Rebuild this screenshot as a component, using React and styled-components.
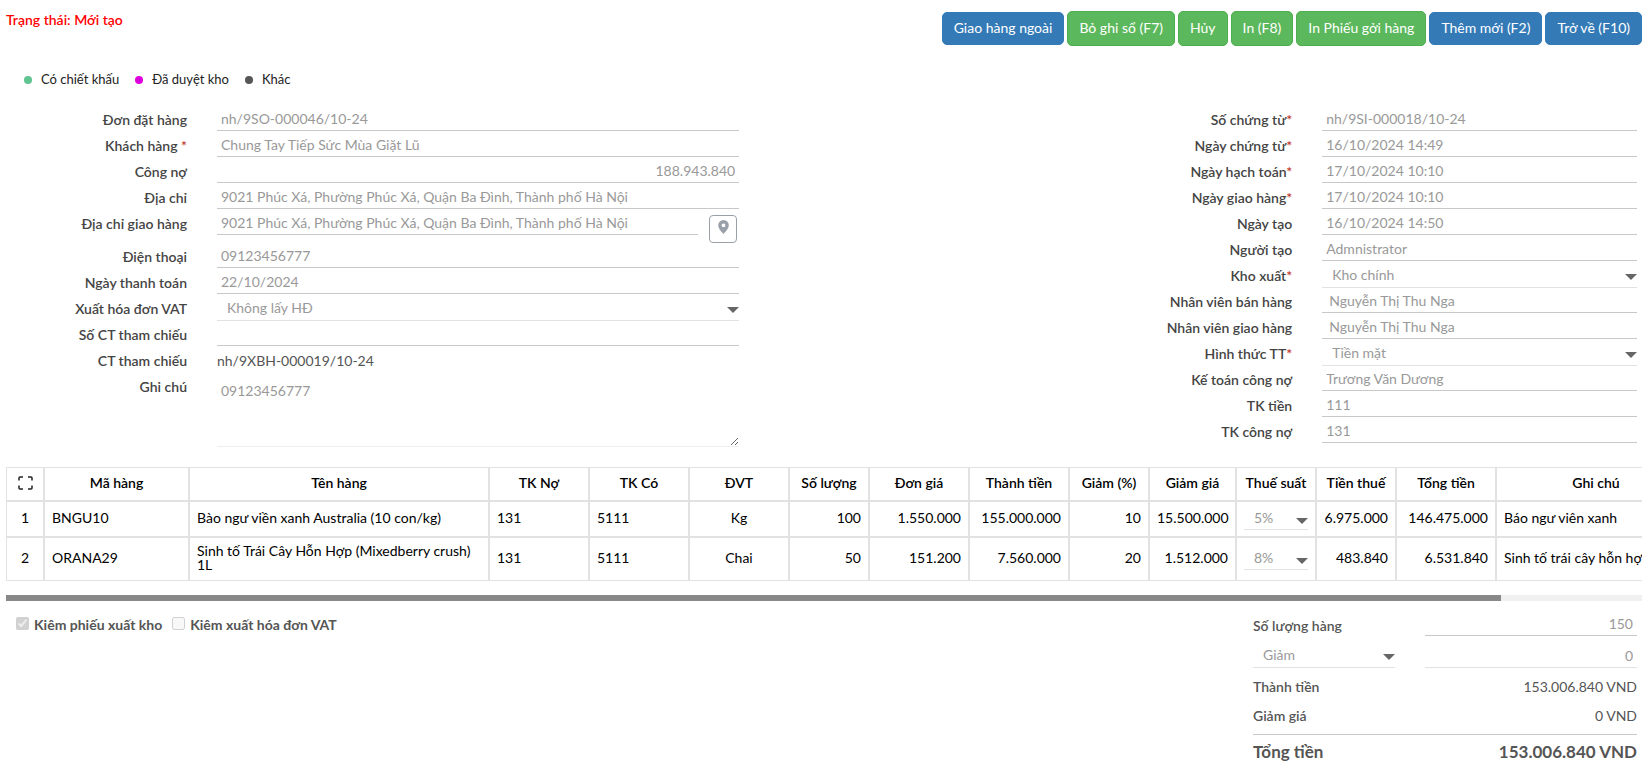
import React from "react";
import styled, { createGlobalStyle, css } from "styled-components";

const GlobalStyle = createGlobalStyle`
  *, *::before, *::after { box-sizing: border-box; }
  body {
    margin: 0;
    background: #fff;
    color: #555;
    font-family: Lato, "Open Sans", sans-serif;
    font-size: 14px;
    line-height: 20px;
  }
  input, select, textarea, button { font: inherit; margin: 0; }
`;

const LINE = "#c8c8c8";
const SOFT_LINE = "#e2e2e2";

const Page = styled.main`
  padding: 10px 7px 8px 6px;
`;

const Header = styled.header`
  display: flex;
  justify-content: space-between;
  align-items: flex-start;
`;

const Status = styled.p`
  margin: 0;
  color: #f00;
  font-weight: 600;
`;

const Toolbar = styled.div`
  display: flex;
  align-items: center;
  gap: 3px;
  height: 37px;
`;

const ActionButton = styled.button`
  padding: 0 11px 2px;
  height: ${(p) => (p.$green ? 35 : 33)}px;
  border: 1px solid ${(p) => (p.$green ? "#4cae4c" : "#337ab7")};
  border-radius: 5px;
  background: ${(p) => (p.$green ? "#5cb85c" : "#337ab7")};
  color: #fff;
  white-space: nowrap;
`;

const Legend = styled.ul`
  display: flex;
  gap: 16px;
  margin: 22px 0 0;
  padding: 0 0 0 18px;
  list-style: none;
  font-size: 13px;
  color: #222;
`;

const LegendItem = styled.li`
  display: flex;
  align-items: center;
  gap: 9px;
  &::before {
    content: "";
    width: 8px;
    height: 8px;
    margin-top: 2px;
    border-radius: 50%;
    background: ${(p) => p.$color};
  }
`;

const Forms = styled.div`
  display: flex;
  justify-content: space-between;
  align-items: flex-start;
  margin-top: 16px;
`;

const FormColumn = styled.div`
  flex: 0 0 ${(p) => p.$basis};
  padding-right: ${(p) => p.$end}px;
`;

const rowHeights = { normal: 26, address: 33, note: 75 };

const Row = styled.div`
  display: grid;
  grid-template-columns: ${(p) => p.$label}px minmax(0, 1fr);
  column-gap: 30px;
  height: ${(p) => rowHeights[p.$size || "normal"]}px;
  align-items: start;
`;

const Label = styled.label`
  padding-top: 5px;
  color: #444;
  font-weight: 600;
  text-align: right;
  white-space: nowrap;
`;

const Required = styled.span`
  color: #c0392b;
`;

const TextInput = styled.input`
  display: block;
  width: 100%;
  min-width: 0;
  height: 26px;
  padding: 2px 4px 0;
  border: 0;
  border-bottom: 1px solid ${(p) => (p.$soft ? SOFT_LINE : LINE)};
  border-radius: 0;
  background: transparent;
  color: #999;
  text-align: ${(p) => (p.$right ? "right" : "left")};
  ${(p) => p.$indent && css`padding-left: 7px;`}
`;

const SelectBox = styled.span`
  display: grid;
  align-items: center;
  width: 100%;
  height: ${(p) => (p.$compact ? 23 : 27)}px;
  border-bottom: 1px solid ${SOFT_LINE};
  & > * { grid-area: 1 / 1; }
  & > svg {
    justify-self: end;
    margin-top: 6px;
    pointer-events: none;
  }
`;

const NativeSelect = styled.select`
  width: 100%;
  height: 100%;
  padding: ${(p) => (p.$compact ? 0 : 2)}px 16px 0 10px;
  border: 0;
  border-radius: 0;
  appearance: none;
  background: transparent;
  color: #999;
  opacity: 1;
`;

const Note = styled.textarea`
  display: block;
  width: 100%;
  height: 75px;
  padding: 9px 4px;
  border: 0;
  border-bottom: 1px solid #eee;
  background: transparent;
  color: #999;
  resize: both;
`;

const Reference = styled.a`
  padding-top: 5px;
  color: #555;
  text-decoration: none;
`;

const AddressField = styled.div`
  display: flex;
  gap: 11px;
  padding-right: 2px;
`;

const PinButton = styled.button`
  display: grid;
  place-items: center;
  flex: none;
  width: 28px;
  height: 28px;
  margin-top: 6px;
  padding: 0 0 4px;
  border: 1px solid #9aa0a9;
  border-radius: 4px;
  background: #fff;
`;

const TableScroller = styled.div`
  margin-top: 20px;
  overflow: hidden;
`;

const Table = styled.table`
  table-layout: fixed;
  width: 1790px;
  border-collapse: separate;
  border-spacing: 0;
  line-height: 14px;
  color: #000;
`;

const Th = styled.th`
  height: 34px;
  padding: 0 4px 2px;
  border: 1px solid ${SOFT_LINE};
  font-weight: 600;
  white-space: nowrap;
  & > svg { display: block; margin: 0 auto; }
`;

const Td = styled.td`
  height: ${(p) => (p.$tall ? 44 : 36)}px;
  padding: 0 7px 2px;
  border: 1px solid ${SOFT_LINE};
  text-align: ${(p) => p.$align || "left"};
  white-space: ${(p) => (p.$wrap ? "normal" : "nowrap")};
  overflow: hidden;
`;

const ScrollTrack = styled.div`
  height: 6px;
  margin-top: 14px;
  background: #f0f0f0;
`;

const ScrollThumb = styled.div`
  height: 100%;
  background: #888;
`;

const Footer = styled.footer`
  display: flex;
  justify-content: space-between;
  align-items: flex-start;
  padding: 9px 5px 0 10px;
`;

const Checks = styled.div`
  display: flex;
  gap: 10px;
  padding-top: 5px;
`;

const CheckLabel = styled.label`
  display: flex;
  align-items: center;
  gap: 5px;
  font-weight: 700;
  & > input {
    width: 13px;
    height: 13px;
    margin: 0 0 4px;
  }
`;

const Summary = styled.div`
  flex: 0 0 384px;
`;

const SummaryRow = styled.div`
  display: grid;
  grid-template-columns: 142px minmax(0, 1fr);
  column-gap: 30px;
  align-items: ${(p) => (p.$fields ? "end" : "center")};
  height: ${(p) => p.$height}px;
`;

const SummaryName = styled.label`
  font-weight: 600;
`;

const Amount = styled.output`
  text-align: right;
`;

const Total = styled.div`
  display: flex;
  justify-content: space-between;
  margin-top: 10px;
  padding-top: 5px;
  border-top: 1px solid ${LINE};
  font-size: 17px;
  line-height: 24px;
  font-weight: 700;
`;

const Caret = () => (
  <svg width="12" height="6" viewBox="0 0 12 6" aria-hidden="true">
    <path d="M0 0h12L6 6z" fill="#666" />
  </svg>
);

const PinIcon = () => (
  <svg width="11" height="14" viewBox="0 0 11 14" aria-hidden="true">
    <path
      d="M5.500 0A5.300 5.300 0 0 0 .2 5.300C.2 9 5.500 14 5.500 14S10.800 9 10.800 5.300A5.300 5.300 0 0 0 5.500 0zm0 7.200a1.900 1.900 0 1 1 0-3.800 1.900 1.900 0 0 1 0 3.800z"
      fill="#9aa0a9"
    />
  </svg>
);

const ExpandIcon = () => (
  <svg width="15" height="14" viewBox="0 0 15 14" fill="none" stroke="#222" strokeWidth="1.500" aria-hidden="true">
    <path d="M1 4.500V2Q1 1 2 1H5M10 1h3q1 0 1 1v2.500M14 9.500V12q0 1-1 1h-3M5 13H2q-1 0-1-1V9.500" />
  </svg>
);

function Dropdown({ id, value, label, compact }) {
  return (
    <SelectBox $compact={compact}>
      <NativeSelect id={id} aria-label={label} defaultValue={value} $compact={compact} disabled>
        <option>{value}</option>
      </NativeSelect>
      <Caret />
    </SelectBox>
  );
}

function Field({ id, label, labelWidth, required, spaced, select, value, right, indent, children, size }) {
  return (
    <Row $label={labelWidth} $size={size}>
      <Label htmlFor={id}>
        {label}
        {spaced && " "}
        {required && <Required>*</Required>}
      </Label>
      {children ||
        (select ? (
          <Dropdown id={id} value={value} />
        ) : (
          <TextInput id={id} defaultValue={value} $right={right} $indent={indent} disabled />
        ))}
    </Row>
  );
}

const actions = [
  ["Giao hàng ngoài", false],
  ["Bỏ ghi sổ (F7)", true],
  ["Hủy", true],
  ["In (F8)", true],
  ["In Phiếu gởi hàng", true],
  ["Thêm mới (F2)", false],
  ["Trở về (F10)", false],
];

const documentFields = [
  { id: "so-chung-tu", label: "Số chứng từ", required: true, value: "nh/9SI-000018/10-24" },
  { id: "ngay-chung-tu", label: "Ngày chứng từ", required: true, value: "16/10/2024 14:49" },
  { id: "ngay-hach-toan", label: "Ngày hạch toán", required: true, value: "17/10/2024 10:10" },
  { id: "ngay-giao-hang", label: "Ngày giao hàng", required: true, value: "17/10/2024 10:10" },
  { id: "ngay-tao", label: "Ngày tạo", value: "16/10/2024 14:50" },
  { id: "nguoi-tao", label: "Người tạo", value: "Admnistrator" },
  { id: "kho-xuat", label: "Kho xuất", required: true, select: true, value: "Kho chính" },
  { id: "nv-ban-hang", label: "Nhân viên bán hàng", indent: true, value: "Nguyễn Thị Thu Nga" },
  { id: "nv-giao-hang", label: "Nhân viên giao hàng", indent: true, value: "Nguyễn Thị Thu Nga" },
  { id: "hinh-thuc-tt", label: "Hình thức TT", required: true, select: true, value: "Tiền mặt" },
  { id: "ke-toan", label: "Kế toán công nợ", value: "Trương Văn Dương" },
  { id: "tk-tien", label: "TK tiền", value: "111" },
  { id: "tk-cong-no", label: "TK công nợ", value: "131" },
];

const columns = [
  ["", 38, "center"],
  ["Mã hàng", 145],
  ["Tên hàng", 300],
  ["TK Nợ", 100],
  ["TK Có", 100],
  ["ĐVT", 100, "center"],
  ["Số lượng", 80, "right"],
  ["Đơn giá", 100, "right"],
  ["Thành tiền", 100, "right"],
  ["Giảm (%)", 80, "right"],
  ["Giảm giá", 87, "right"],
  ["Thuế suất", 80],
  ["Tiền thuế", 80, "right"],
  ["Tổng tiền", 100, "right"],
  ["Ghi chú", 200],
];

const items = [
  ["1", "BNGU10", "Bào ngư viền xanh Australia (10 con/kg)", "131", "5111", "Kg", "100", "1.550.000", "155.000.000", "10", "15.500.000", "5%", "6.975.000", "146.475.000", "Báo ngư viên xanh"],
  ["2", "ORANA29", "Sinh tố Trái Cây Hỗn Hợp (Mixedberry crush) 1L", "131", "5111", "Chai", "50", "151.200", "7.560.000", "20", "1.512.000", "8%", "483.840", "6.531.840", "Sinh tố trái cây hỗn hợp"],
];

export default function App() {
  return (
    <Page>
      <GlobalStyle />
      <Header>
        <Status>Trạng thái: Mới tạo</Status>
        <Toolbar>
          {actions.map(([text, green]) => (
            <ActionButton key={text} type="button" $green={green}>{text}</ActionButton>
          ))}
        </Toolbar>
      </Header>

      <Legend>
        <LegendItem $color="#5fc490">Có chiết khấu</LegendItem>
        <LegendItem $color="#dc00dc">Đã duyệt kho</LegendItem>
        <LegendItem $color="#555">Khác</LegendItem>
      </Legend>

      <Forms>
        <FormColumn $basis="45%" $end={3}>
          <Field labelWidth={181} id="don-dat-hang" label="Đơn đặt hàng" value="nh/9SO-000046/10-24" />
          <Field labelWidth={181} id="khach-hang" label="Khách hàng" required spaced value="Chung Tay Tiếp Sức Mùa Giặt Lũ" />
          <Field labelWidth={181} id="cong-no" label="Công nợ" right value="188.943.840" />
          <Field labelWidth={181} id="dia-chi" label="Địa chỉ" value="9021 Phúc Xá, Phường Phúc Xá, Quận Ba Đình, Thành phố Hà Nội" />
          <Field labelWidth={181} id="dia-chi-giao" label="Địa chỉ giao hàng" size="address">
            <AddressField>
              <TextInput id="dia-chi-giao" defaultValue="9021 Phúc Xá, Phường Phúc Xá, Quận Ba Đình, Thành phố Hà Nội" disabled />
              <PinButton type="button" aria-label="Chọn vị trí">
                <PinIcon />
              </PinButton>
            </AddressField>
          </Field>
          <Field labelWidth={181} id="dien-thoai" label="Điện thoại" value="09123456777" />
          <Field labelWidth={181} id="ngay-thanh-toan" label="Ngày thanh toán" value="22/10/2024" />
          <Field labelWidth={181} id="xuat-hoa-don" label="Xuất hóa đơn VAT" select value="Không lấy HĐ" />
          <Field labelWidth={181} id="so-ct" label="Số CT tham chiếu" value="" />
          <Field labelWidth={181} id="ct-tham-chieu" label="CT tham chiếu">
            <Reference id="ct-tham-chieu" href="#ct">nh/9XBH-000019/10-24</Reference>
          </Field>
          <Field labelWidth={181} id="ghi-chu" label="Ghi chú" size="note">
            <Note id="ghi-chu" defaultValue="09123456777" disabled />
          </Field>
        </FormColumn>
        <FormColumn $basis="30%" $end={5}>
          {documentFields.map((f) => (
            <Field key={f.id} labelWidth={141} {...f} />
          ))}
        </FormColumn>
      </Forms>

      <TableScroller>
        <Table>
          <colgroup>
            {columns.map(([name, width]) => (
              <col key={name} width={width} />
            ))}
            <col />
          </colgroup>
          <thead>
            <tr>
              {columns.map(([name]) => (
                <Th key={name} scope="col">{name || <ExpandIcon />}</Th>
              ))}
              <Th scope="col" />
            </tr>
          </thead>
          <tbody>
            {items.map((cells, r) => (
              <tr key={cells[0]}>
                {cells.map((value, c) => (
                  <Td key={c} $align={columns[c][2]} $wrap={c === 2} $tall={r === 1}>
                    {c === 11 ? <Dropdown label="Thuế suất" value={value} compact /> : value}
                  </Td>
                ))}
                <Td />
              </tr>
            ))}
          </tbody>
        </Table>
      </TableScroller>
      <ScrollTrack>
        <ScrollThumb style={{ width: `${(1636 / 1790) * 100}%` }} />
      </ScrollTrack>

      <Footer>
        <Checks>
          <CheckLabel>
            <input type="checkbox" defaultChecked disabled />
            Kiêm phiếu xuất kho
          </CheckLabel>
          <CheckLabel>
            <input type="checkbox" disabled />
            Kiêm xuất hóa đơn VAT
          </CheckLabel>
        </Checks>
        <Summary>
          <SummaryRow $height={26} $fields>
            <SummaryName htmlFor="so-luong">Số lượng hàng</SummaryName>
            <TextInput id="so-luong" defaultValue="150" $right disabled />
          </SummaryRow>
          <SummaryRow $height={32} $fields>
            <Dropdown label="Loại giảm" value="Giảm" />
            <TextInput aria-label="Giảm" defaultValue="0" $right $soft disabled />
          </SummaryRow>
          <SummaryRow $height={38}>
            <SummaryName as="span">Thành tiền</SummaryName>
            <Amount>153.006.840 VND</Amount>
          </SummaryRow>
          <SummaryRow $height={18}>
            <SummaryName as="span">Giảm giá</SummaryName>
            <Amount>0 VND</Amount>
          </SummaryRow>
          <Total>
            <span>Tổng tiền</span>
            <output>153.006.840 VND</output>
          </Total>
        </Summary>
      </Footer>
    </Page>
  );
}
